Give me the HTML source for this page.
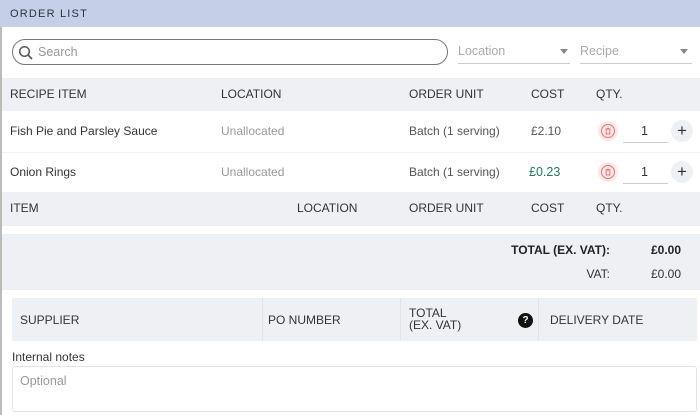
<!DOCTYPE html>
<html><head><meta charset="utf-8"><style>
*{box-sizing:border-box;margin:0;padding:0}
body{width:700px;height:415px;overflow:hidden;background:#fff;font-family:"Liberation Sans",sans-serif;font-size:12px;color:#333;position:relative}
.a{position:absolute;white-space:nowrap}
.g{background:#eef0f4}
</style></head><body>
<div class="a" style="left:0;top:0;width:700px;height:27px;background:#c5d0e8"></div>
<div class="a" style="left:10px;top:8px;font-size:11px;letter-spacing:1.2px;color:#2b3445">ORDER LIST</div>
<div class="a" style="left:0;top:27px;width:2px;height:388px;background:#bbb"></div>
<div class="a" style="left:12px;top:39px;width:436px;height:26px;border:1px solid #777;border-radius:13px"></div>
<svg class="a" style="left:18px;top:45px" width="16" height="16" viewBox="0 0 16 16"><circle cx="6.5" cy="6.5" r="4.8" fill="none" stroke="#555" stroke-width="1.5"/><path d="M10 10l4 4" stroke="#555" stroke-width="1.6"/></svg>
<div class="a" style="left:38px;top:45px;color:#999;font-size:12.5px">Search</div>
<div class="a" style="left:458px;top:44px;color:#aaa;font-size:12.5px">Location</div>
<div class="a" style="left:458px;top:63px;width:112px;height:1px;background:#ccc"></div>
<div class="a" style="left:560px;top:49px;border:4px solid transparent;border-top:5px solid #888;border-bottom:0"></div>
<div class="a" style="left:580px;top:44px;color:#aaa;font-size:12.5px">Recipe</div>
<div class="a" style="left:580px;top:63px;width:112px;height:1px;background:#ccc"></div>
<div class="a" style="left:680px;top:49px;border:4px solid transparent;border-top:5px solid #888;border-bottom:0"></div>

<div class="a g" style="left:2px;top:78px;width:698px;height:33px"></div>
<div class="a" style="left:10px;top:87px">RECIPE ITEM</div>
<div class="a" style="left:221px;top:87px">LOCATION</div>
<div class="a" style="left:409px;top:87px">ORDER UNIT</div>
<div class="a" style="left:531px;top:87px">COST</div>
<div class="a" style="left:596px;top:87px">QTY.</div>

<div class="a" style="left:2px;top:152px;width:698px;height:1px;background:#f0f0f0"></div>
<div class="a" style="left:10px;top:124px">Fish Pie and Parsley Sauce</div>
<div class="a" style="left:221px;top:124px;color:#999">Unallocated</div>
<div class="a" style="left:409px;top:124px;color:#555">Batch (1 serving)</div>
<div class="a" style="left:531px;top:124px;color:#555">£2.10</div>
<div class="a" style="left:10px;top:165px">Onion Rings</div>
<div class="a" style="left:221px;top:165px;color:#999">Unallocated</div>
<div class="a" style="left:409px;top:165px;color:#555">Batch (1 serving)</div>
<div class="a" style="left:529px;top:165px;color:#1f7a5a;font-size:12.5px">£0.23</div>

<svg class="a" style="left:598px;top:121px" width="20" height="20" viewBox="0 0 20 20"><circle cx="10" cy="10" r="10" fill="#fde8e6"/><circle cx="10" cy="10" r="6.5" fill="none" stroke="#e57373"/><path d="M7.5 8h5M8.2 8.5v4.5h3.6V8.5M9 7.2h2" fill="none" stroke="#e57373" stroke-width="1"/></svg>
<svg class="a" style="left:598px;top:162px" width="20" height="20" viewBox="0 0 20 20"><circle cx="10" cy="10" r="10" fill="#fde8e6"/><circle cx="10" cy="10" r="6.5" fill="none" stroke="#e57373"/><path d="M7.5 8h5M8.2 8.5v4.5h3.6V8.5M9 7.2h2" fill="none" stroke="#e57373" stroke-width="1"/></svg>
<div class="a" style="left:623px;top:142px;width:45px;height:1px;background:#ccc"></div>
<div class="a" style="left:623px;top:183px;width:45px;height:1px;background:#ccc"></div>
<div class="a" style="left:641px;top:124px;font-size:12.5px">1</div>
<div class="a" style="left:641px;top:165px;font-size:12.5px">1</div>
<div class="a" style="left:671px;top:120px;width:22px;height:22px;border-radius:50%;background:#eef0f4;text-align:center;line-height:21px;font-size:17px">+</div>
<div class="a" style="left:671px;top:161px;width:22px;height:22px;border-radius:50%;background:#eef0f4;text-align:center;line-height:21px;font-size:17px">+</div>

<div class="a g" style="left:2px;top:192px;width:698px;height:34px"></div>
<div class="a" style="left:10px;top:201px">ITEM</div>
<div class="a" style="left:297px;top:201px">LOCATION</div>
<div class="a" style="left:409px;top:201px">ORDER UNIT</div>
<div class="a" style="left:531px;top:201px">COST</div>
<div class="a" style="left:596px;top:201px">QTY.</div>

<div class="a g" style="left:2px;top:234px;width:698px;height:56px"></div>
<div class="a" style="right:90px;top:243px;font-weight:bold;color:#222">TOTAL (EX. VAT):</div>
<div class="a" style="right:19px;top:243px;font-weight:bold;color:#222">£0.00</div>
<div class="a" style="right:90px;top:267px">VAT:</div>
<div class="a" style="right:19px;top:267px">£0.00</div>

<div class="a g" style="left:12px;top:298px;width:685px;height:43px"></div>
<div class="a" style="left:262px;top:298px;width:1px;height:43px;background:#e2e4ea"></div>
<div class="a" style="left:400px;top:298px;width:1px;height:43px;background:#e2e4ea"></div>
<div class="a" style="left:538px;top:298px;width:1px;height:43px;background:#e2e4ea"></div>
<div class="a" style="left:20px;top:313px">SUPPLIER</div>
<div class="a" style="left:268px;top:313px">PO NUMBER</div>
<div class="a" style="left:409px;top:307px;line-height:12px">TOTAL<br>(EX. VAT)</div>
<div class="a" style="left:518px;top:313px;width:15px;height:15px;border-radius:50%;background:#111;color:#fff;font-size:10px;font-weight:bold;text-align:center;line-height:15px">?</div>
<div class="a" style="left:550px;top:313px">DELIVERY DATE</div>

<div class="a" style="left:12px;top:350px">Internal notes</div>
<div class="a" style="left:12px;top:366px;width:685px;height:46px;border:1px solid #e4e4e4;border-radius:3px"></div>
<div class="a" style="left:20px;top:374px;color:#999;font-size:12.5px">Optional</div>
</body></html>
